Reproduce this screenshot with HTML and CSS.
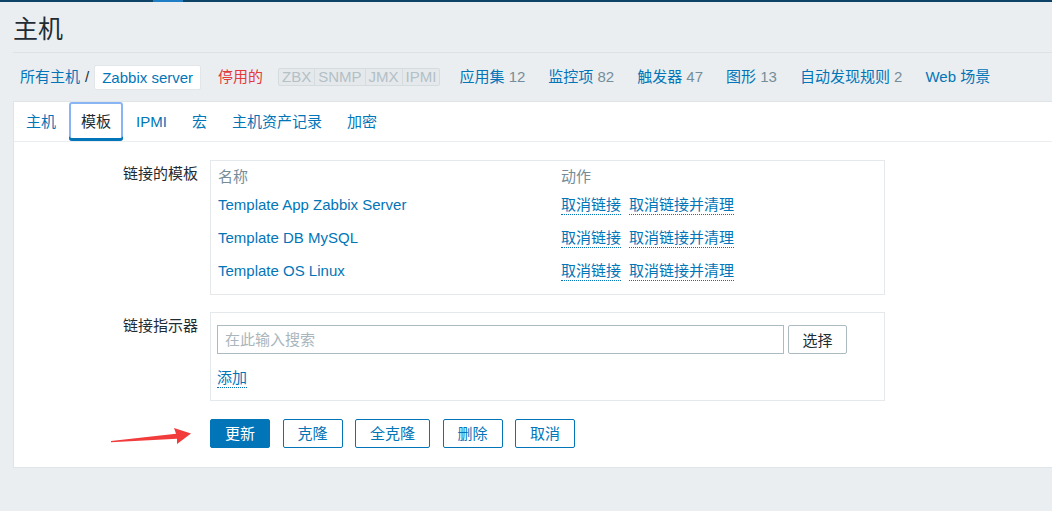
FILE: index.html
```html
<!DOCTYPE html>
<html lang="zh-CN">
<head>
<meta charset="utf-8">
<title>主机</title>
<link rel="stylesheet" href="styles.css">
</head>
<body>
<div class="topbar"><span class="topbar-active"></span></div>
<div class="page">
  <header class="page-header"><h1>主机</h1></header>
  <nav class="crumbs">
    <a class="link crumb-first">所有主机</a>
    <span class="crumb-sep">/</span>
    <span class="crumb-current">Zabbix server</span>
    <span class="status-disabled">停用的</span>
    <span class="status-group">
      <span class="status-box">ZBX</span><span class="status-box">SNMP</span><span class="status-box">JMX</span><span class="status-box">IPMI</span>
    </span>
    <a class="link nav-item nav-first">应用集 <span class="count">12</span></a>
    <a class="link nav-item">监控项 <span class="count">82</span></a>
    <a class="link nav-item">触发器 <span class="count">47</span></a>
    <a class="link nav-item">图形 <span class="count">13</span></a>
    <a class="link nav-item">自动发现规则 <span class="count">2</span></a>
    <a class="link nav-item">Web 场景</a>
  </nav>
  <main class="panel">
    <ul class="tabs">
      <li class="tab">主机</li>
      <li class="tab tab-selected">模板</li>
      <li class="tab">IPMI</li>
      <li class="tab">宏</li>
      <li class="tab">主机资产记录</li>
      <li class="tab">加密</li>
    </ul>
    <form class="form">
      <div class="form-label">链接的模板</div>
      <div class="box box-templates">
        <table class="tpl-table">
          <thead>
            <tr><th class="col-name">名称</th><th>动作</th></tr>
          </thead>
          <tbody>
            <tr><td><a class="link">Template App Zabbix Server</a></td><td><a class="action">取消链接</a><a class="action">取消链接并清理</a></td></tr>
            <tr><td><a class="link">Template DB MySQL</a></td><td><a class="action">取消链接</a><a class="action">取消链接并清理</a></td></tr>
            <tr><td><a class="link">Template OS Linux</a></td><td><a class="action">取消链接</a><a class="action">取消链接并清理</a></td></tr>
          </tbody>
        </table>
      </div>
      <div class="form-label">链接指示器</div>
      <div class="box box-link">
        <div class="search-row">
          <input class="search-input" type="text" placeholder="在此输入搜索">
          <button type="button" class="btn-select">选择</button>
        </div>
        <a class="action add-link">添加</a>
      </div>
      <div class="buttons">
        <button type="button" class="btn btn-primary">更新</button>
        <button type="button" class="btn">克隆</button>
        <button type="button" class="btn">全克隆</button>
        <button type="button" class="btn">删除</button>
        <button type="button" class="btn">取消</button>
      </div>
    </form>
  </main>
</div>
<svg class="arrow" width="86" height="22" viewBox="0 0 86 22" aria-hidden="true">
  <polygon points="3,16 68,8.8 66,3 83,8.6 69,19 69,13.8 3,17.2" fill="#f23b3b"/>
</svg>
</body>
</html>
```

FILE: styles.css
```css
* { box-sizing: border-box; }

html, body {
  margin: 0;
  padding: 0;
}

body {
  background: #ebeef0;
  font-family: "Liberation Sans", Arial, "Noto Sans CJK SC", sans-serif;
  font-size: 15px;
  color: #1f2c33;
  overflow: hidden;
  height: 511px;
  position: relative;
}

.topbar {
  height: 2px;
  background: #0d4366;
  display: flex;
}

.topbar-active {
  margin-left: 153px;
  width: 30px;
  background: #1f7fc6;
}

.page {
  padding-left: 13px;
}

.page-header {
  border-bottom: 1px solid #dde2e5;
}

.page-header h1 {
  margin: 0;
  padding: 12px 0 8px;
  font-size: 25px;
  line-height: 30px;
  font-weight: normal;
  color: #1f2c33;
}

.crumbs {
  height: 48px;
  display: flex;
  align-items: center;
  white-space: nowrap;
  line-height: 18px;
}

.link {
  color: #0275b8;
  text-decoration: none;
  cursor: pointer;
}

.crumb-first {
  margin-left: 7px;
}

.crumb-sep {
  padding: 0 5px;
  color: #1f2c33;
}

.crumb-current {
  background: #fff;
  border: 1px solid #e2e6e9;
  border-radius: 2px;
  padding: 0 7px;
  height: 25px;
  line-height: 23px;
  color: #0275b8;
}

.status-disabled {
  margin-left: 17px;
  color: #e33a3a;
}

.status-group {
  margin-left: 15px;
  display: flex;
  height: 18px;
}

.status-box {
  border: 1px solid #d5dce0;
  background: #e5e9ec;
  color: #b3c0c6;
  padding: 0 3px;
  line-height: 16px;
}

.status-box + .status-box {
  margin-left: -1px;
}

.status-box:first-child {
  border-radius: 2px 0 0 2px;
}

.status-box:last-child {
  border-radius: 0 2px 2px 0;
}

.nav-item {
  margin-left: 23px;
}

.nav-first {
  margin-left: 19px;
}

.count {
  color: #768d99;
}

.panel {
  background: #fff;
  border: 1px solid #dfe4e7;
  border-right: none;
  height: 367px;
}

.tabs {
  list-style: none;
  margin: 0;
  padding: 0;
  display: flex;
  height: 40px;
  border-bottom: 1px solid #ebeef0;
}

.tab {
  height: 39px;
  line-height: 39px;
  padding: 0 12px;
  margin-right: 1px;
  color: #0275b8;
  cursor: pointer;
}

.tab-selected {
  color: #1f2c33;
  border-radius: 3px;
  box-shadow: inset 0 -3px 0 #0275b8, inset 0 0 0 2px #8ab5f5;
}

.form {
  display: grid;
  grid-template-columns: 184px 675px;
  column-gap: 12px;
  padding-top: 18px;
  align-items: start;
}

.form-label {
  text-align: right;
  padding-top: 5px;
  line-height: 18px;
  color: #1f2c33;
}

.box {
  border: 1px solid #e5e9eb;
}

.box-templates {
  padding: 5px 7px 7px;
  margin-bottom: 17px;
}

.tpl-table {
  border-collapse: collapse;
  width: 100%;
}

.tpl-table th {
  text-align: left;
  font-weight: normal;
  color: #768d99;
  height: 22px;
  line-height: 22px;
  padding: 0;
}

.tpl-table .col-name {
  width: 343px;
}

.tpl-table td {
  height: 33px;
  padding: 0;
  vertical-align: middle;
  white-space: nowrap;
}

.action {
  display: inline-block;
  color: #0275b8;
  line-height: 19px;
  border-bottom: 1px dotted #0275b8;
  cursor: pointer;
}

.action + .action {
  margin-left: 8px;
}

.box-link {
  padding: 12px 6px 12px;
  margin-bottom: 18px;
}

.search-row {
  display: flex;
  gap: 4px;
}

.search-input {
  width: 567px;
  height: 29px;
  border: 1px solid #acbbc2;
  border-radius: 0;
  padding: 0 7px;
  font: inherit;
  font-size: 15px;
  color: #1f2c33;
  outline: none;
}

.search-input::placeholder {
  color: #a9b6bd;
}

.btn-select {
  width: 59px;
  height: 29px;
  border: 1px solid #acbbc2;
  border-radius: 2px;
  background: #fff;
  font: inherit;
  font-size: 15px;
  color: #1f2c33;
  padding: 0;
}

.add-link {
  margin-top: 15px;
  line-height: 18px;
}

.buttons {
  grid-column: 2;
  display: flex;
  gap: 12.5px;
}

.btn {
  height: 29px;
  padding: 0 14px;
  border: 1px solid #0275b8;
  border-radius: 2px;
  background: #fff;
  color: #0275b8;
  font: inherit;
  font-size: 15px;
  line-height: 27px;
}

.btn-primary {
  background: #0275b8;
  color: #fff;
}

.arrow {
  position: absolute;
  left: 108px;
  top: 425px;
}
```
